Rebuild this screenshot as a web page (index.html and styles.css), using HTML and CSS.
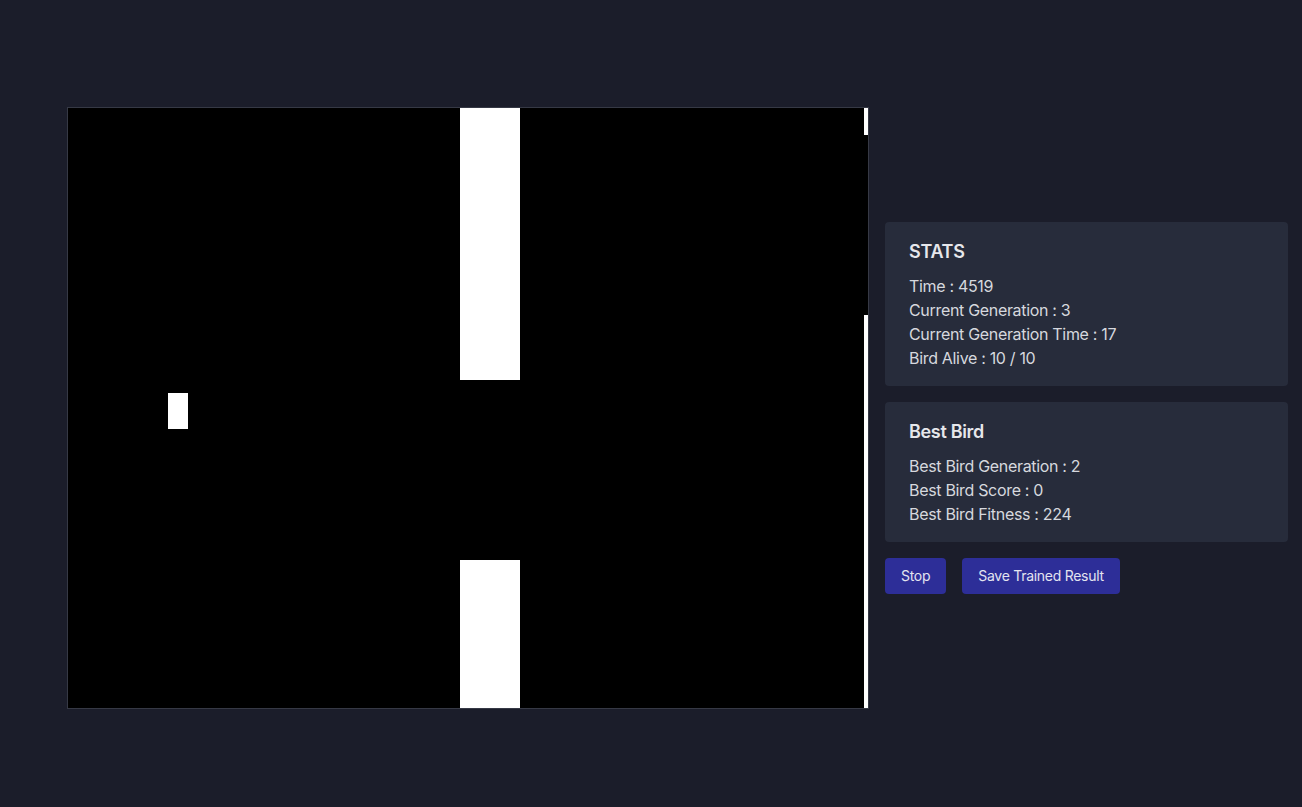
FILE: index.html
```html
<!DOCTYPE html>
<html>
<head>
<meta charset="utf-8">
<link rel="stylesheet" href="styles.css">
</head>
<body>
<main class="layout">
  <div class="game">
    <div class="pipe pipe-top-a"></div>
    <div class="pipe pipe-bottom-a"></div>
    <div class="pipe pipe-top-b"></div>
    <div class="pipe pipe-bottom-b"></div>
    <div class="bird"></div>
  </div>
  <aside class="side">
    <section class="panel">
      <h2 class="panel-title">STATS</h2>
      <p class="line">Time : 4519</p>
      <p class="line">Current Generation : 3</p>
      <p class="line">Current Generation Time : 17</p>
      <p class="line">Bird Alive : 10 / 10</p>
    </section>
    <section class="panel">
      <h2 class="panel-title">Best Bird</h2>
      <p class="line">Best Bird Generation : 2</p>
      <p class="line">Best Bird Score : 0</p>
      <p class="line">Best Bird Fitness : 224</p>
    </section>
    <div class="actions">
      <button class="btn">Stop</button>
      <button class="btn">Save Trained Result</button>
    </div>
  </aside>
</main>
</body>
</html>
```

FILE: styles.css
```css
* { box-sizing: border-box; }
html, body {
  margin: 0;
  height: 100%;
}
body {
  background: #1b1d2a;
  font-family: Inter, "Noto Sans", sans-serif;
  letter-spacing: -0.02em;
  color: #d6d8de;
}
.layout {
  height: 100%;
  display: flex;
  align-items: center;
  gap: 16px;
  padding-left: 67px;
  padding-top: 8px;
}
.game {
  position: relative;
  width: 802px;
  height: 602px;
  flex: none;
  background: #000;
  border: 1px solid #363945;
  overflow: hidden;
}
.pipe, .bird {
  position: absolute;
  background: #fff;
}
.pipe-top-a { left: 392px; top: 0; width: 60px; height: 272px; }
.pipe-bottom-a { left: 392px; top: 452px; width: 60px; height: 148px; }
.pipe-top-b { left: 796px; top: 0; width: 4px; height: 27px; }
.pipe-bottom-b { left: 796px; top: 207px; width: 4px; height: 393px; }
.bird { left: 100px; top: 285px; width: 20px; height: 36px; }
.side {
  width: 403px;
  display: flex;
  flex-direction: column;
  gap: 16px;
}
.panel {
  background: #272c3b;
  border-radius: 4px;
  padding: 16px 24px;
}
.panel-title {
  margin: 0 0 8px;
  font-size: 18px;
  line-height: 28px;
  font-weight: 600;
  color: #e6e7eb;
}
.line {
  margin: 0;
  font-size: 16px;
  line-height: 24px;
  color: #d6d8de;
}
.actions {
  display: flex;
  gap: 16px;
}
.btn {
  height: 36px;
  padding: 0 16px;
  border: none;
  border-radius: 4px;
  background: #2d2e98;
  color: #e3e4f0;
  font-family: Inter, "Noto Sans", sans-serif;
  letter-spacing: -0.02em;
  font-size: 14px;
}
```
